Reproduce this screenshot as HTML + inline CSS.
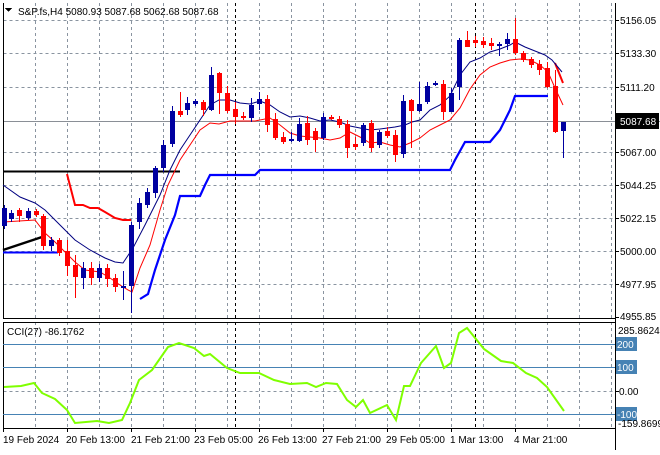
<!DOCTYPE html>
<html><head><meta charset="utf-8"><style>
html,body{margin:0;padding:0;background:#fff;}
body{width:660px;height:450px;overflow:hidden;font-family:"Liberation Sans",sans-serif;}
svg text{font-family:"Liberation Sans",sans-serif;font-size:10px;fill:#000;}
</style></head><body>
<svg width="660" height="450" viewBox="0 0 660 450" xmlns="http://www.w3.org/2000/svg" shape-rendering="crispEdges">
<rect width="660" height="450" fill="#fff"/>
<g stroke="#8a94a0" stroke-width="1" stroke-dasharray="3,3">
<path d="M3.5 20.5H615M3.5 53.5H615M3.5 87.5H615M3.5 152.5H615M3.5 185.5H615M3.5 218.5H615M3.5 251.5H615M3.5 284.5H615"/>
<path d="M35.5 3V318M67.5 3V318M99.5 3V318M131.5 3V318M163.5 3V318M195.5 3V318M227.5 3V318M259.5 3V318M291.5 3V318M323.5 3V318M355.5 3V318M387.5 3V318M419.5 3V318M451.5 3V318M483.5 3V318M515.5 3V318M547.5 3V318M579.5 3V318M611.5 3V318"/>
<path d="M35.5 322V428M67.5 322V428M99.5 322V428M131.5 322V428M163.5 322V428M195.5 322V428M227.5 322V428M259.5 322V428M291.5 322V428M323.5 322V428M355.5 322V428M387.5 322V428M419.5 322V428M451.5 322V428M483.5 322V428M515.5 322V428M547.5 322V428M579.5 322V428M611.5 322V428"/>
<path d="M3.5 391.5H615"/>
</g>
<g stroke="#000" stroke-width="1" stroke-dasharray="3,3">
<path d="M235.5 3V318M475.5 3V318M235.5 322V428M475.5 322V428"/>
</g>
<path d="M3 121.5H660" stroke="#8a8f96" stroke-width="1"/>
<g fill="none" stroke="#000" stroke-width="1">
<path d="M3.5 3V318.5H615.5V3"/>
<path d="M3.5 322.5H615.5V428.5H3.5Z"/>
</g>
<path d="M615.5 3V450" stroke="#000"/>
<g stroke="#000"><path d="M615 20.5h4M615 53.5h4M615 87.5h4M615 152.5h4M615 185.5h4M615 218.5h4M615 251.5h4M615 284.5h4M615 317.5h4M615 344.5h4M615 367.5h4M615 391.5h4M615 414.5h4"/>
<path d="M3.5 428v4M67.5 428v4M131.5 428v4M195.5 428v4M259.5 428v4M323.5 428v4M387.5 428v4M451.5 428v4M515.5 428v4"/></g>

<g shape-rendering="auto" fill="none">
<path d="M3 171.5H180" stroke="#000" stroke-width="2"/>
<path d="M3 250L42 237" stroke="#000" stroke-width="2.5"/>
<path d="M3 252.5H58" stroke="#0000ff" stroke-width="2"/>
<path d="M140 299L148 294L155 270L165 240L175 215L180 196L200 196L205 185L210 175L255 175L260 170L450 170L455 160L465 142L490 142L500 130L510 110L515 96L548 96" stroke="#0000ff" stroke-width="2.2"/>
<path d="M67 174L75 205L83 205L90 208L98 208L105 212L115 218L123 220L131 220" stroke="#ff0000" stroke-width="2"/>
<path d="M555 63L563 83" stroke="#ff0000" stroke-width="2"/>
<path d="M3 185L20 197L35 203L45 210L60 225L75 240L90 250L105 258L115 262L123 263L133 248L145 225L160 195L170 170L180 150L190 135L200 120L210 105L219 100L230 100L240 103L250 104L260 101L270 105L280 112L290 117L300 116L310 118L320 121L330 120L340 122L350 126L360 128L370 130L380 129L395 127L405 125L412 122L420 120L430 110L440 105L450 96L460 75L470 62L480 58L490 52L500 49L510 45L515 42L525 47L535 51L545 55L552 60L562 72" stroke="#000080" stroke-width="1"/>
<path d="M3 222L35 220L45 233L55 242L65 252L75 262L85 270L100 272L110 278L120 285L128 290L132 292L140 268L150 245L160 210L168 185L180 160L190 145L200 130L210 123L219 124L230 121L255 121L260 120L270 118L280 125L290 133L300 136L320 138L330 140L340 138L350 132L360 137L370 143L380 142L390 145L400 147L410 143L420 138L430 130L440 125L450 120L460 108L470 89L480 75L490 67L500 63L510 60L520 59L530 60L540 65L548 72L555 88L563 105" stroke="#ff0000" stroke-width="1"/>
</g>

<g>
<g fill="#0000a0" stroke="#0000a0">
<path d="M4.5 205V229M11.5 210V222M28.5 208V220M51.5 237V251M83.5 262V289M99.5 264V282M123.5 271V300M131.5 222V313M139.5 198V229M147.5 188V208M155.5 166V198M163.5 140V172M172.5 106V147M187.5 97V115M195.5 99V106M211.5 67V111M251.5 98V122M259.5 92V110M291.5 132V142M299.5 118V142M323.5 113V140M363.5 123V146M379.5 130V148M403.5 95V158M419.5 82V112M427.5 82V104M435.5 81V86M451.5 88V112M459.5 38V100M499.5 42V56M507.5 33V50M563.5 122V158"/>
</g>
<g fill="#0000a0">
<rect x="2" y="208" width="5" height="18"/><rect x="9" y="213" width="5" height="6"/><rect x="26" y="211" width="5" height="7"/><rect x="49" y="240" width="5" height="6"/><rect x="81" y="268" width="5" height="10"/><rect x="97" y="268" width="5" height="10"/><rect x="121" y="286" width="5" height="2"/><rect x="129" y="225" width="5" height="61"/><rect x="137" y="203" width="5" height="19"/><rect x="145" y="192" width="5" height="13"/><rect x="153" y="168" width="5" height="25"/><rect x="161" y="145" width="5" height="23"/><rect x="170" y="111" width="5" height="33"/><rect x="185" y="103" width="5" height="7"/><rect x="193" y="101" width="5" height="3"/><rect x="209" y="75" width="5" height="35"/><rect x="249" y="105" width="5" height="13"/><rect x="257" y="99" width="5" height="5"/><rect x="289" y="139" width="5" height="2"/><rect x="297" y="124" width="5" height="17"/><rect x="321" y="117" width="5" height="21"/><rect x="361" y="125" width="5" height="18"/><rect x="377" y="132" width="5" height="13"/><rect x="401" y="101" width="5" height="53"/><rect x="417" y="104" width="5" height="7"/><rect x="425" y="86" width="5" height="16"/><rect x="433" y="83" width="5" height="2"/><rect x="449" y="93" width="5" height="19"/><rect x="457" y="40" width="5" height="47"/><rect x="497" y="44" width="5" height="2"/><rect x="505" y="39" width="5" height="5"/><rect x="561" y="122" width="5" height="9"/>
</g>
<g stroke="#ff0000">
<path d="M19.5 208V222M36.5 209V217M43.5 214V250M59.5 238V256M67.5 240V276M75.5 255V298M91.5 262V285M107.5 264V287M115.5 274V292M180.5 92V117M203.5 100V116M219.5 72V114M227.5 86V113M235.5 102V124M243.5 112V120M267.5 95V132M275.5 113V140M283.5 132V144M307.5 116V145M315.5 128V152M331.5 115V120M339.5 116V128M347.5 120V158M355.5 137V150M371.5 120V152M387.5 127V138M395.5 130V162M411.5 99V148M443.5 80V120M467.5 31V47M475.5 36V47M483.5 37V48M491.5 38V50M515.5 18V55M523.5 51V62M531.5 57V68M539.5 60V75M547.5 62V88M555.5 70V133"/>
</g>
<g fill="#ff0000">
<rect x="17" y="210" width="5" height="6"/><rect x="34" y="211" width="5" height="4"/><rect x="41" y="216" width="5" height="30"/><rect x="57" y="240" width="5" height="13"/><rect x="65" y="251" width="5" height="15"/><rect x="73" y="265" width="5" height="12"/><rect x="89" y="268" width="5" height="10"/><rect x="105" y="268" width="5" height="11"/><rect x="113" y="278" width="5" height="9"/><rect x="178" y="111" width="5" height="4"/><rect x="201" y="102" width="5" height="8"/><rect x="217" y="73" width="5" height="20"/><rect x="225" y="93" width="5" height="18"/><rect x="233" y="109" width="5" height="8"/><rect x="241" y="116" width="5" height="2"/><rect x="265" y="99" width="5" height="26"/><rect x="273" y="119" width="5" height="19"/><rect x="281" y="137" width="5" height="5"/><rect x="305" y="123" width="5" height="17"/><rect x="313" y="131" width="5" height="9"/><rect x="329" y="117" width="5" height="2"/><rect x="337" y="119" width="5" height="6"/><rect x="345" y="124" width="5" height="24"/><rect x="353" y="144" width="5" height="3"/><rect x="369" y="123" width="5" height="25"/><rect x="385" y="131" width="5" height="5"/><rect x="393" y="135" width="5" height="20"/><rect x="409" y="100" width="5" height="11"/><rect x="441" y="84" width="5" height="28"/><rect x="465" y="40" width="5" height="7"/><rect x="473" y="40" width="5" height="3"/><rect x="481" y="41" width="5" height="4"/><rect x="489" y="43" width="5" height="3"/><rect x="513" y="39" width="5" height="14"/><rect x="521" y="53" width="5" height="7"/><rect x="529" y="59" width="5" height="6"/><rect x="537" y="64" width="5" height="6"/><rect x="545" y="68" width="5" height="19"/><rect x="553" y="86" width="5" height="46"/>
</g>
</g>

<g stroke="#4682b4" stroke-width="1"><path d="M3 344.5H615M3 367.5H615M3 414.5H615"/></g>
<path shape-rendering="auto" fill="none" stroke="#7fff00" stroke-width="2" d="M4 387L21 386L34 383L42 393L55 399L67 410L75 423L97 421L109 423L122 420L130 403L139 380L152 370L168 347L179 343L194 348L204 356L210 354L227 368L240 373L259 373L274 380L290 384L307 383L316 387L326 383L337 384L347 400L356 407L363 400L370 413L387 405L396 420L404 386L410 386L421 363L436 346L444 368L451 363L459 333L467 328L484 349L501 361L513 363L526 373L537 378L547 387L564 411"/>

<path d="M5 8h7l-3.5 4z" fill="#000"/>
<text x="18" y="15">S&amp;P.fs,H4  5080.93 5087.68 5062.68 5087.68</text>
<text x="7" y="335">CCI(27) -86.1762</text>

<g>
<text x="620" y="24">5156.05</text>
<text x="620" y="57">5133.30</text>
<text x="620" y="91">5111.20</text>
<text x="620" y="156">5067.00</text>
<text x="620" y="189">5044.25</text>
<text x="620" y="222">5022.15</text>
<text x="620" y="255">5000.00</text>
<text x="620" y="288">4977.95</text>
<text x="620" y="320">4955.85</text>
</g>
<rect x="616" y="113" width="43" height="16" fill="#000"/>
<text x="620" y="125" style="fill:#fff">5087.68</text>
<text x="618" y="334">285.8624</text>
<rect x="616" y="337" width="21" height="14" fill="#4682b4"/><text x="617" y="348" style="fill:#fff">200</text>
<rect x="616" y="360" width="21" height="14" fill="#4682b4"/><text x="617" y="371" style="fill:#fff">100</text>
<text x="619" y="395">0.00</text>
<rect x="616" y="407" width="21" height="14" fill="#4682b4"/><text x="617" y="418" style="fill:#fff">-100</text>
<text x="618" y="427">-159.8699</text>

<g>
<text x="3" y="443">19 Feb 2024</text>
<text x="66" y="443">20 Feb 13:00</text>
<text x="131" y="443">21 Feb 21:00</text>
<text x="194" y="443">23 Feb 05:00</text>
<text x="258" y="443">26 Feb 13:00</text>
<text x="322" y="443">27 Feb 21:00</text>
<text x="386" y="443">29 Feb 05:00</text>
<text x="450" y="443">1 Mar 13:00</text>
<text x="514" y="443">4 Mar 21:00</text>
</g>
</svg>
</body></html>
